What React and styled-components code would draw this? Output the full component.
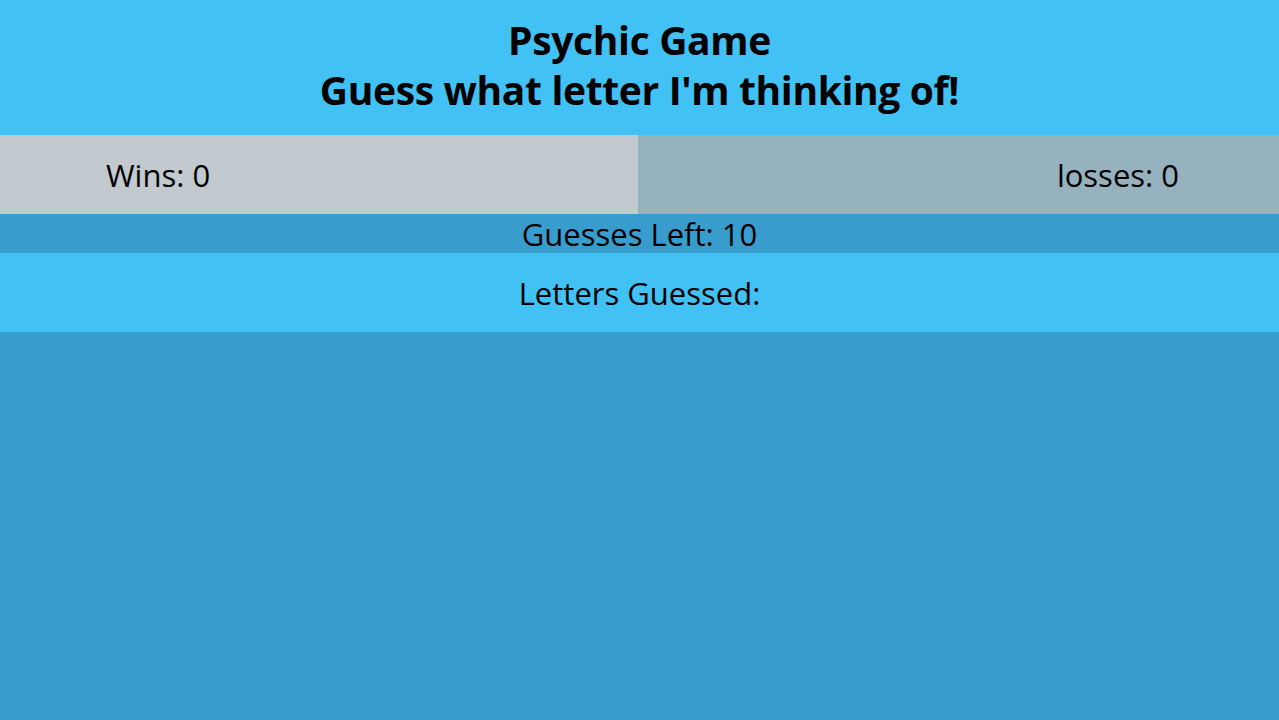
import React from 'react';
import styled, { createGlobalStyle } from 'styled-components';

const GlobalStyle = createGlobalStyle`
  html, body {
    margin: 0;
    padding: 0;
    background: #389dcd;
    font-family: "Open Sans", "Noto Sans", sans-serif;
    color: #000;
  }
`;

const Page = styled.div`
  min-height: 720px;
  background: #389dcd;
`;

const Header = styled.header`
  background: #42c1f5;
  height: 135px;
  box-sizing: border-box;
  padding-bottom: 6px;
  display: flex;
  flex-direction: column;
  align-items: center;
  justify-content: center;
  h1 {
    margin: 0;
    font-size: 39px;
    line-height: 50px;
    font-weight: 700;
    text-align: center;
    letter-spacing: -0.35px;
  }
`;

const Stats = styled.div`
  display: grid;
  grid-template-columns: 638px 1fr;
  height: 79px;
`;

const StatCell = styled.div`
  display: flex;
  align-items: center;
  justify-content: ${p => (p.$right ? 'flex-end' : 'flex-start')};
  padding: ${p => (p.$right ? '0 100px 0 0' : '0 0 0 106px')};
  background: ${p => p.$bg};
  font-size: 31px;
`;

const Band = styled.div`
  display: flex;
  align-items: center;
  justify-content: center;
  height: ${p => p.$h}px;
  background: ${p => p.$bg};
  font-size: 31px;
`;

function App() {
  return (
    <Page>
      <GlobalStyle />
      <Header>
        <h1>Psychic Game</h1>
        <h1>Guess what letter I'm thinking of!</h1>
      </Header>
      <Stats>
        <StatCell $bg="#c2c9cf">Wins: 0</StatCell>
        <StatCell $bg="#97b2bf" $right>losses: 0</StatCell>
      </Stats>
      <Band $h={39} $bg="#389dcd">Guesses Left: 10</Band>
      <Band $h={79} $bg="#42c1f5">Letters Guessed:</Band>
    </Page>
  );
}

export default App;
